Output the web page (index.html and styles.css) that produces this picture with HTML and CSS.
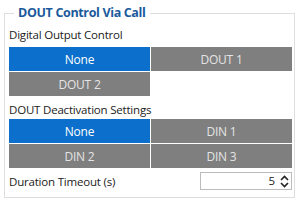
FILE: index.html
```html
<!DOCTYPE html>
<html lang="en">
<head>
<meta charset="UTF-8">
<meta name="viewport" content="width=device-width, initial-scale=1.0">
<title>DOUT Control Via Call</title>
<link rel="stylesheet" href="styles.css">
</head>
<body>
    <fieldset class="panel">
        <legend>DOUT Control Via Call</legend>

        <div class="label top">Digital Output Control</div>
        <div class="options">
            <button class="opt active">None</button>
            <button class="opt">DOUT 1</button>
            <button class="opt">DOUT 2</button>
        </div>

        <div class="label">DOUT Deactivation Settings</div>
        <div class="options">
            <button class="opt active">None</button>
            <button class="opt">DIN 1</button>
            <button class="opt">DIN 2</button>
            <button class="opt">DIN 3</button>
        </div>

        <div class="row">
            <span class="row-label">Duration Timeout (s)</span>
            <div class="spin">
                <span class="spin-value">5</span>
                <svg class="spin-arrows" width="9" height="13" viewBox="0 0 9 13">
                    <path d="M1 5 L4.5 1.5 L8 5" fill="none" stroke="#222" stroke-width="1.6"/>
                    <path d="M1 8 L4.5 11.5 L8 8" fill="none" stroke="#222" stroke-width="1.6"/>
                </svg>
            </div>
        </div>
    </fieldset>
</body>
</html>
```

FILE: styles.css
```css
body {
    margin: 0;
    padding: 0;
    background-color: #fff;
    font-family: "Open Sans", Lato, sans-serif;
    font-size: 11.5px;
    letter-spacing: -0.2px;
    color: #222;
}
.panel {
    margin: 4px 4px 0 4px;
    padding: 0 2px 7px 4px;
    border: 1px solid #dedede;
    width: 290px;
    box-sizing: border-box;
}
.panel legend {
    margin-left: 5px;
    padding: 0 4px;
    font-size: 12.5px;
    font-weight: bold;
    letter-spacing: -0.35px;
    line-height: 18px;
    color: #1b5a9c;
}
.label {
    line-height: 16px;
    margin: 6px 0 1px;
}
.label.top {
    margin: 5px 0 4px;
}
.options {
    display: grid;
    grid-template-columns: 141px 141px;
    grid-auto-rows: 24px;
    gap: 1px;
}
.opt {
    border: none;
    margin: 0;
    padding: 0;
    font-family: inherit;
    font-size: 12px;
    letter-spacing: -0.2px;
    background-color: #7f7f7f;
    color: #e4e4e4;
    cursor: pointer;
}
.opt.active {
    background-color: #0b6fcb;
    color: #fff;
}
.row {
    display: flex;
    align-items: center;
    justify-content: space-between;
    margin-top: 4px;
    height: 18px;
}
.spin {
    width: 92px;
    height: 18px;
    box-sizing: border-box;
    border: 1px solid #bcbcbc;
    display: flex;
    align-items: center;
    justify-content: flex-end;
    gap: 5px;
    padding-right: 2px;
}
.spin-value {
    line-height: 16px;
}
.spin-arrows {
    display: block;
}
```
